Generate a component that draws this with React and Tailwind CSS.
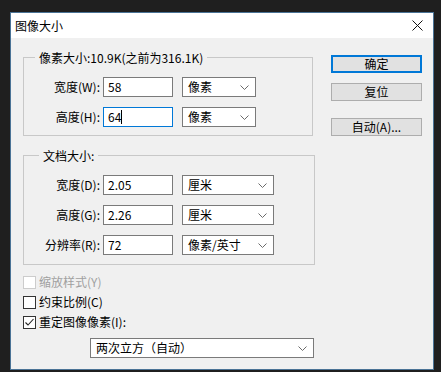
import React from 'react';

const FONT = { fontFamily: '"Noto Sans CJK SC", "Microsoft YaHei", sans-serif' };

const Chevron = () => (
  <svg width="9" height="5" viewBox="0 0 9 5" className="shrink-0">
    <path d="M0.5 0.5 L4.5 4.5 L8.5 0.5" fill="none" stroke="#6b6b6b" strokeWidth="1" />
  </svg>
);

const Select = ({ value, width }) => (
  <div className={`flex items-center justify-between h-[20px] bg-white border border-[#7a7a7a] pl-[5px] pr-[6px] ${width}`}>
    <span className="leading-[18px]">{value}</span>
    <Chevron />
  </div>
);

const Field = ({ label, value, unit, selectWidth, active }) => (
  <div className="flex items-center h-[20px]">
    <span className="w-[76px] text-right leading-[20px] whitespace-nowrap">{label}</span>
    <div
      className={`ml-[3px] w-[70px] h-[20px] bg-white border pl-[4px] flex items-center ${
        active ? 'border-[#0078d7]' : 'border-[#7a7a7a]'
      }`}
    >
      <span className="leading-[18px]">{value}</span>
      {active && <span className="w-px h-[14px] bg-black" />}
    </div>
    <div className="ml-[9px]">
      <Select value={unit} width={selectWidth} />
    </div>
  </div>
);

const Check = ({ label, checked, disabled }) => (
  <div className={`flex items-center h-[20px] ${disabled ? 'text-[#a0a0a0]' : 'text-black'}`}>
    <div
      className={`w-[13px] h-[13px] border bg-white flex items-center justify-center ${
        disabled ? 'border-[#cccccc]' : 'border-[#333333]'
      }`}
    >
      {checked && (
        <svg width="11" height="11" viewBox="0 0 11 11">
          <path d="M1.5 5.5 L4 8 L9.5 2" fill="none" stroke="#222" strokeWidth="1.1" />
        </svg>
      )}
    </div>
    <span className="ml-[3px] leading-[20px]">{label}</span>
  </div>
);

const Button = ({ children, primary, className = '' }) => (
  <div
    className={`h-[18px] w-[91px] flex items-center justify-center bg-[#e1e1e1] leading-[14px] ${
      primary ? 'border-2 border-[#0078d7]' : 'border border-[#adadad]'
    } ${className}`}
  >
    {children}
  </div>
);

export default function App() {
  return (
    <div className="w-[441px] h-[372px] bg-[#1f1f1f] overflow-hidden pt-[12px] pl-[10px] text-[12px] text-black" style={FONT}>
      <div className="w-[424px] h-[358px] border border-[#4a7396] flex flex-col">
        {/* Title bar */}
        <div className="h-[25px] bg-white flex items-center justify-between pl-[4px] pr-[10px] shrink-0">
          <span className="leading-[25px]">图像大小</span>
          <svg width="11" height="11" viewBox="0 0 11 11">
            <path d="M0.5 0.5 L10.5 10.5 M10.5 0.5 L0.5 10.5" stroke="#111" strokeWidth="1" />
          </svg>
        </div>

        {/* Body */}
        <div className="flex-1 bg-[#f0f0f0] flex">
          <div className="pl-[12px] w-[320px]">
            <fieldset className="mt-[11px] w-[290px] border border-[#c8c8c8] pb-[8px]">
              <legend className="ml-[11px] px-[4px] leading-[17px]">像素大小:10.9K(之前为316.1K)</legend>
              <div className="mt-[11px] flex flex-col gap-[10px]">
                <Field label="宽度(W):" value="58" unit="像素" selectWidth="w-[74px]" />
                <Field label="高度(H):" value="64" unit="像素" selectWidth="w-[74px]" active />
              </div>
            </fieldset>

            <fieldset className="mt-[11px] w-[292px] border border-[#c8c8c8] pb-[9px]">
              <legend className="ml-[15px] px-[4px] leading-[17px]">文档大小:</legend>
              <div className="mt-[11px] flex flex-col gap-[10px]">
                <Field label="宽度(D):" value="2.05" unit="厘米" selectWidth="w-[92px]" />
                <Field label="高度(G):" value="2.26" unit="厘米" selectWidth="w-[92px]" />
                <Field label="分辨率(R):" value="72" unit="像素/英寸" selectWidth="w-[92px]" />
              </div>
            </fieldset>

            <div className="mt-[7px]">
              <Check label="缩放样式(Y)" disabled />
              <Check label="约束比例(C)" />
              <Check label="重定图像像素(I):" checked />
            </div>

            <div className="mt-[6px] ml-[67px]">
              <Select value="两次立方（自动）" width="w-[224px]" />
            </div>
          </div>

          <div className="ml-[0px] pt-[17px] flex flex-col">
            <Button primary>确定</Button>
            <Button className="mt-[10px]">复位</Button>
            <Button className="mt-[17px]">自动(A)...</Button>
          </div>
        </div>
      </div>
    </div>
  );
}
